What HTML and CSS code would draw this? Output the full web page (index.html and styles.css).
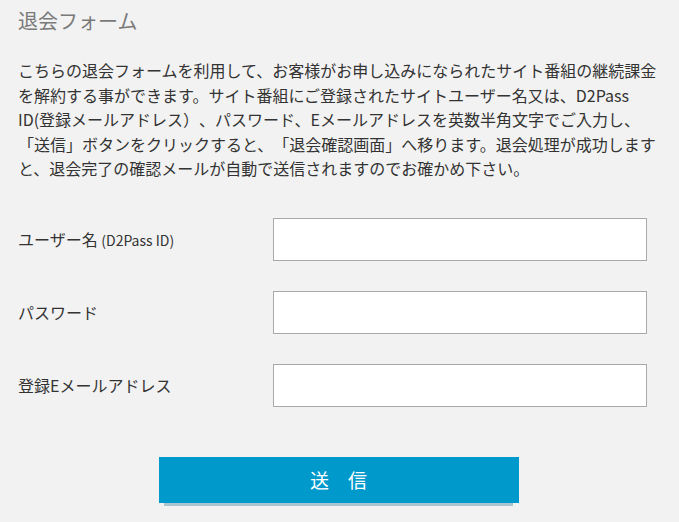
FILE: index.html
```html
<!DOCTYPE html>
<html lang="ja">
<head>
<meta charset="utf-8">
<title>退会フォーム</title>
<link rel="stylesheet" href="styles.css">
</head>
<body>
<div class="page">
  <h1 class="title">退会フォーム</h1>
  <p class="intro">こちらの退会フォームを利用して、お客様がお申し込みになられたサイト番組の継続課金を解約する事ができます。サイト番組にご登録されたサイトユーザー名又は、D2Pass ID(登録メールアドレス）、パスワード、Eメールアドレスを英数半角文字でご入力し、<br>「送信」ボタンをクリックすると、「退会確認画面」へ移ります。退会処理が成功しますと、退会完了の確認メールが自動で送信されますのでお確かめ下さい。</p>
  <form class="form">
    <div class="row">
      <label class="label">ユーザー名 <span class="label-sub">(D2Pass ID)</span></label>
      <input class="field" type="text">
    </div>
    <div class="row">
      <label class="label">パスワード</label>
      <input class="field" type="password">
    </div>
    <div class="row">
      <label class="label">登録Eメールアドレス</label>
      <input class="field" type="text">
    </div>
    <div class="actions">
      <div class="submit-wrap">
        <button class="submit" type="button">送　信</button>
        <div class="submit-shadow"></div>
      </div>
    </div>
  </form>
</div>
</body>
</html>
```

FILE: styles.css
```css
html, body {
  margin: 0;
  padding: 0;
  background: #f2f2f2;
}

.page {
  padding: 6px 20px 0 18px;
  font-family: "Noto Sans CJK JP", "Noto Sans", sans-serif;
  color: #333333;
  text-spacing-trim: space-all;
}

.title {
  margin: 0;
  font-size: 20px;
  line-height: 30px;
  font-weight: normal;
  color: #7a7a7a;
}

.intro {
  margin: 22px 0 0;
  font-size: 16px;
  line-height: 24.5px;
  letter-spacing: 0;
}

.form {
  margin-top: 37px;
  display: flex;
  flex-direction: column;
  gap: 30px;
}

.row {
  display: flex;
  align-items: center;
}

.label {
  width: 255px;
  font-size: 16px;
  line-height: 24px;
}

.label-sub {
  font-size: 14px;
}

.field {
  width: 374px;
  height: 43px;
  box-sizing: border-box;
  margin: 0;
  border: 1px solid #a9a9a9;
  background: #ffffff;
  padding: 0 8px;
  font-size: 16px;
}

.actions {
  display: flex;
  justify-content: center;
  margin-top: 20px;
}

.submit-wrap {
  display: flex;
  flex-direction: column;
  width: 360px;
}

.submit {
  height: 46px;
  margin: 0;
  border: 0;
  background: #0099cc;
  color: #ffffff;
  font-family: "Noto Sans CJK JP", sans-serif;
  font-size: 19px;
  line-height: 46px;
  padding: 0;
}

.submit-shadow {
  height: 3px;
  margin: 0 6px 0 5px;
  background: #a9c6cf;
}
```
